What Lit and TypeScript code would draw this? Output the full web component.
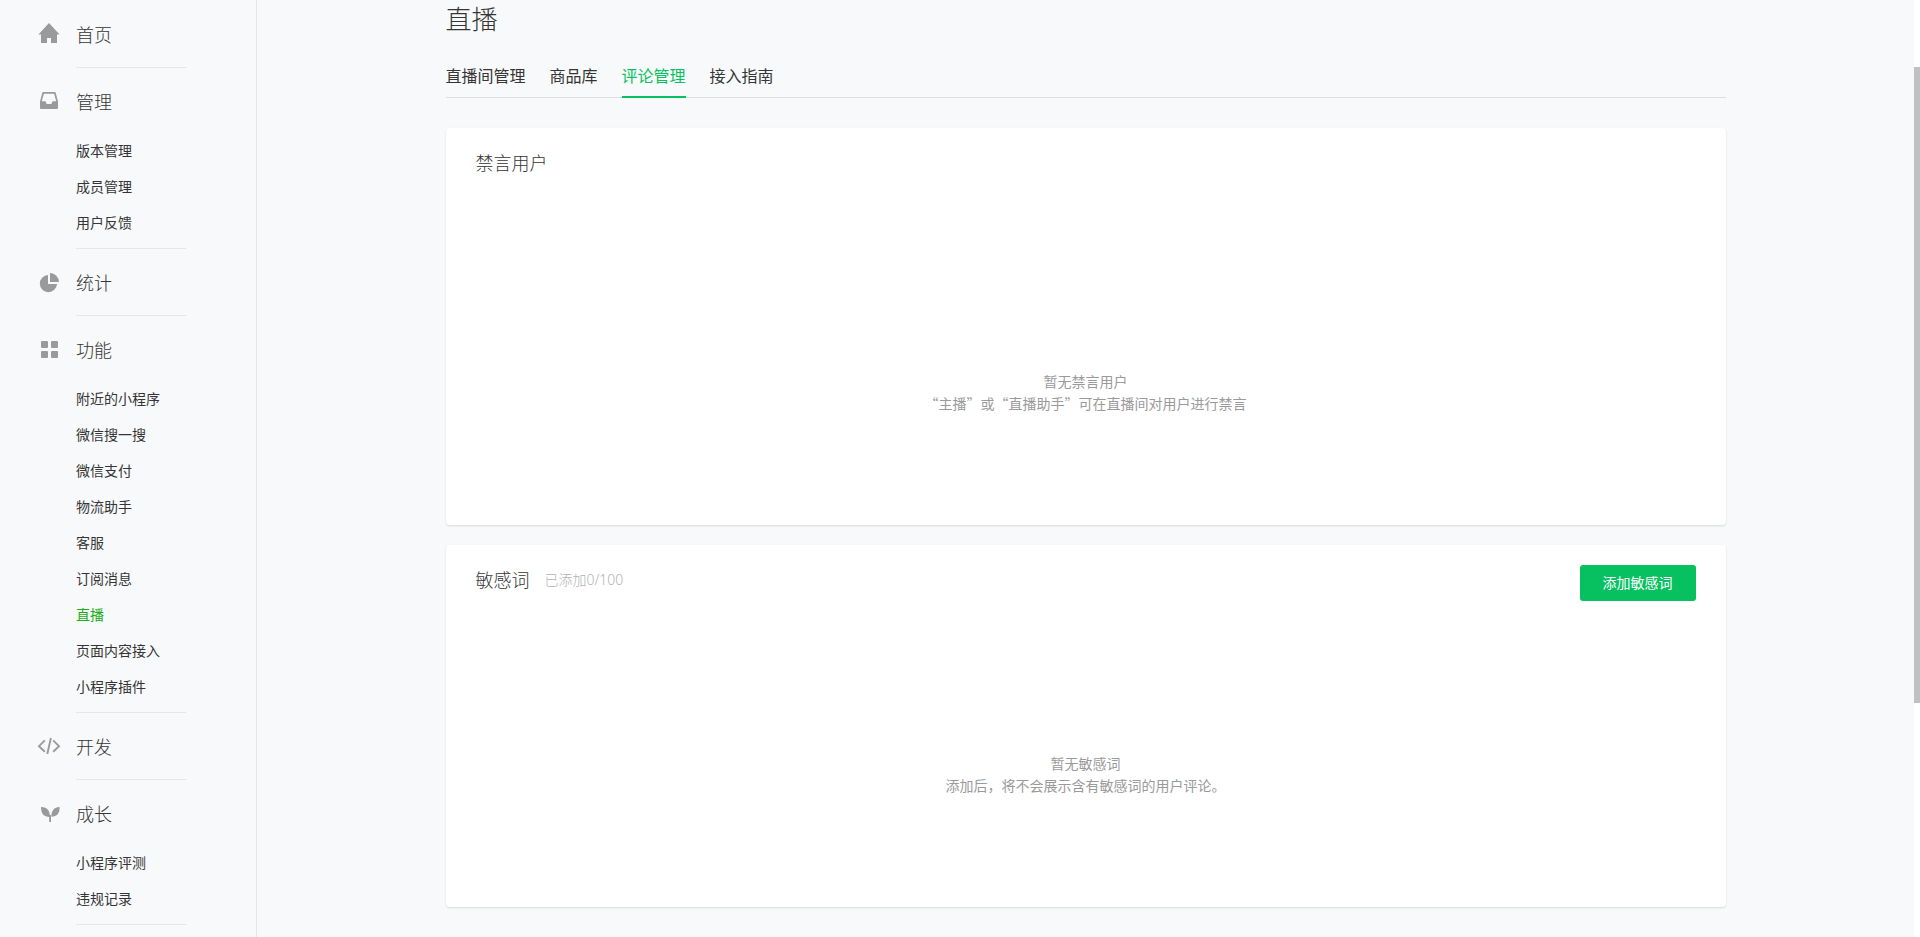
import { LitElement, html, svg, css, nothing } from "lit";
import { customElement, state } from "lit/decorators.js";
import { classMap } from "lit/directives/class-map.js";

interface NavGroup {
  title: string;
  icon: unknown;
  items?: string[];
}

const GROUPS: NavGroup[] = [
  {
    title: "首页",
    icon: svg`<path d="M12 0 22.600 11.400H20V20h-6v-5h-4v5H4v-8.600H1.400z"/>`,
  },
  {
    title: "管理",
    icon: svg`<path fill-rule="evenodd" d="M6.200 2h11.600q.7 0 .9.700L21 11.400V18q0 1-1 1H4q-1 0-1-1v-6.600L5.300 2.700q.2-.7.9-.7zM6.900 3.700 4.800 11.200H8.500L9.700 14h4.600l1.200-2.800h3.700L17.100 3.700z"/>`,
    items: ["版本管理", "成员管理", "用户反馈"],
  },
  {
    title: "统计",
    icon: svg`<path d="M11 4v9h9a8.600 8.600 0 1 1-9-9zM13 2.100A9 9 0 0 1 22 11h-9z"/>`,
  },
  {
    title: "功能",
    icon: svg`<rect x="4" y="3" width="7" height="7" rx="1"/><rect x="14" y="3" width="7" height="7" rx="1"/><rect x="4" y="13" width="7" height="7" rx="1"/><rect x="14" y="13" width="7" height="7" rx="1"/>`,
    items: [
      "附近的小程序",
      "微信搜一搜",
      "微信支付",
      "物流助手",
      "客服",
      "订阅消息",
      "直播",
      "页面内容接入",
      "小程序插件",
    ],
  },
  {
    title: "开发",
    icon: svg`<path fill="none" stroke="currentColor" stroke-width="1.900" d="M7.800 5.400 2 11.200l5.800 5.600M16.200 5.400 22 11.200l-5.800 5.600M13.900 3 10.300 19"/>`,
  },
  {
    title: "成长",
    icon: svg`<path d="M4 5c6-.2 9 3.500 9 10-6 .2-9-3.500-9-10zM22.600 5c.3 6-2.600 9.800-8.200 9.800C14.200 9 17 5 22.600 5zM12.200 13H14v7h-1.800z"/>`,
    items: ["小程序评测", "违规记录"],
  },
];

const TABS = ["直播间管理", "商品库", "评论管理", "接入指南"];

@customElement("side-nav")
export class SideNav extends LitElement {
  @state() private current = "直播";

  static styles = css`
    :host {
      display: block;
      box-sizing: border-box;
      width: 257px;
      padding-top: 1px;
      border-right: 1px solid #e4e6e9;
    }
    .group {
      display: grid;
      grid-template-columns: 24px 1fr;
      column-gap: 15px;
      padding-left: 37px;
    }
    .group::after {
      content: "";
      grid-column: 2;
      width: 110px;
      height: 1px;
      background: #e4e6e9;
    }
    .body {
      padding-bottom: 2px;
    }
    .icon {
      width: 24px;
      height: 24px;
      padding-top: 22px;
      overflow: visible;
      fill: currentColor;
      color: #9a9a9a;
    }
    h2 {
      margin: 0;
      padding: 19px 0 17px;
      font-size: 18px;
      font-weight: 300;
      line-height: 28px;
    }
    ul {
      margin: 0;
      padding: 0 0 6px;
      list-style: none;
    }
    a {
      display: block;
      color: inherit;
      font-size: 14px;
      line-height: 36px;
      text-decoration: none;
    }
    .active {
      color: #1aad19;
    }
  `;

  private select(e: Event, item: string) {
    e.preventDefault();
    this.current = item;
  }

  render() {
    return html`<nav>
      ${GROUPS.map(
        (g) => html`<section class="group">
          <svg class="icon" viewBox="0 0 24 24" aria-hidden="true">${g.icon}</svg>
          <div class="body">
            <h2>${g.title}</h2>
            ${g.items
              ? html`<ul>
                  ${g.items.map(
                    (item) => html`<li>
                      <a
                        href="#"
                        class=${classMap({ active: item === this.current })}
                        @click=${(e: Event) => this.select(e, item)}
                        >${item}</a
                      >
                    </li>`
                  )}
                </ul>`
              : nothing}
          </div>
        </section>`
      )}
    </nav>`;
  }
}

@customElement("app-root")
export class AppRoot extends LitElement {
  @state() private tab = "评论管理";

  static styles = css`
    :host {
      display: grid;
      grid-template-columns: auto minmax(0, 1fr) 6px;
      min-height: 100vh;
      background: #f8f9fb;
      color: #353535;
      font-family: "Noto Sans CJK SC", "Noto Sans", sans-serif;
      font-weight: 400;
    }
    main {
      box-sizing: border-box;
      width: 100%;
      max-width: 1280px;
      margin: 0 auto;
    }
    h1 {
      margin: 0;
      font-size: 26px;
      font-weight: 300;
      line-height: 36px;
    }
    .tabs {
      display: flex;
      gap: 24px;
      margin: 19px 0 30px;
      border-bottom: 1px solid #dcdfe2;
    }
    .tab {
      margin-bottom: -1px;
      border-bottom: 2px solid transparent;
      color: inherit;
      font-size: 16px;
      line-height: 41px;
      text-decoration: none;
    }
    .tab.active {
      border-color: #07c160;
      color: #07c160;
    }
    .card {
      display: flex;
      flex-direction: column;
      margin-bottom: 20px;
      padding: 20px 30px 111px;
      border-radius: 4px;
      background: #fff;
      box-shadow: 0 1px 2px rgba(150, 150, 150, 0.3);
    }
    .head {
      display: flex;
      align-items: flex-start;
      gap: 15px;
    }
    h3 {
      margin: 0;
      font-size: 18px;
      font-weight: 300;
      line-height: 28px;
    }
    .count {
      flex: 1;
      color: #b2b2b2;
      font-family: "Noto Sans", "Noto Sans CJK SC", sans-serif;
      font-size: 14px;
      font-weight: 300;
      line-height: 30px;
    }
    button {
      height: 36px;
      padding: 0 23px 2px;
      border: 0;
      border-radius: 3px;
      background: #07c160;
      color: #fff;
      font: 400 14px "Noto Sans CJK SC", sans-serif;
      cursor: pointer;
    }
    .empty {
      margin: 0;
      padding-top: 151px;
      color: #9a9a9a;
      font-size: 14px;
      line-height: 22px;
      text-align: center;
    }
    .muted .empty {
      padding-top: 194px;
    }
    .scroll {
      display: flex;
      flex-direction: column;
      background: #fff;
    }
    .scroll::before {
      content: "";
      flex: 67;
    }
    .scroll::after {
      content: "";
      flex: 234;
    }
    .thumb {
      flex: 636;
      background: #c1c1c1;
    }
  `;

  private select(e: Event, tab: string) {
    e.preventDefault();
    this.tab = tab;
  }

  render() {
    return html`
      <side-nav></side-nav>
      <main>
        <h1>直播</h1>
        <nav class="tabs">
          ${TABS.map(
            (t) => html`<a
              href="#"
              class=${classMap({ tab: true, active: t === this.tab })}
              @click=${(e: Event) => this.select(e, t)}
              >${t}</a
            >`
          )}
        </nav>
        <section class="card muted">
          <div class="head"><h3>禁言用户</h3></div>
          <p class="empty">暂无禁言用户<br />“主播”或“直播助手”可在直播间对用户进行禁言</p>
        </section>
        <section class="card">
          <div class="head">
            <h3>敏感词</h3>
            <span class="count">已添加0/100</span>
            <button type="button">添加敏感词</button>
          </div>
          <p class="empty">暂无敏感词<br />添加后，将不会展示含有敏感词的用户评论。</p>
        </section>
      </main>
      <div class="scroll" aria-hidden="true"><div class="thumb"></div></div>
    `;
  }
}
